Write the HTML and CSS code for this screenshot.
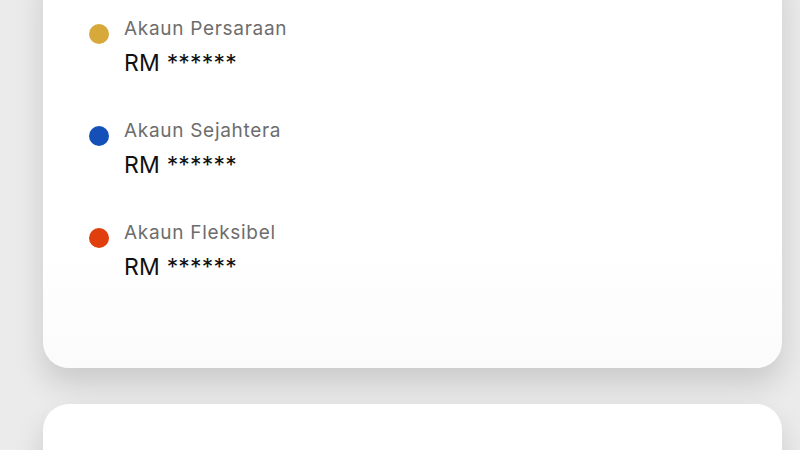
FILE: index.html
```html
<!DOCTYPE html>
<html>
<head>
<meta charset="utf-8">
<link rel="stylesheet" href="styles.css">
</head>
<body>
<div class="page">
  <div class="card card-top">
    <div class="row">
      <span class="dot dot-gold"></span>
      <div class="info">
        <div class="label">Akaun Persaraan</div>
        <div class="value">RM ******</div>
      </div>
    </div>
    <div class="row">
      <span class="dot dot-blue"></span>
      <div class="info">
        <div class="label">Akaun Sejahtera</div>
        <div class="value">RM ******</div>
      </div>
    </div>
    <div class="row">
      <span class="dot dot-red"></span>
      <div class="info">
        <div class="label">Akaun Fleksibel</div>
        <div class="value">RM ******</div>
      </div>
    </div>
  </div>
  <div class="card card-next"></div>
</div>
</body>
</html>
```
FILE: styles.css
```css
html, body {
  margin: 0;
  padding: 0;
  width: 800px;
  height: 450px;
  overflow: hidden;
  background: #ebebeb;
  font-family: "Inter", "Liberation Sans", sans-serif;
}
.page {
  display: flex;
  flex-direction: column;
  gap: 36px;
  padding: 0 18px 0 43px;
  margin-top: -40px;
}
.card {
  background: #ffffff;
  border-radius: 26px;
  box-shadow: 0 16px 30px rgba(0, 0, 0, 0.14);
}
.card-top {
  height: 408px;
  padding: 57px 0 0 46px;
  box-sizing: border-box;
  display: flex;
  flex-direction: column;
  gap: 42px;
  background: linear-gradient(#ffffff 70%, #fbfbfb 100%);
}
.card-next {
  height: 120px;
}
.row {
  display: flex;
  align-items: flex-start;
  gap: 15px;
}
.dot {
  width: 20px;
  height: 20px;
  border-radius: 50%;
  margin-top: 7px;
  flex: none;
}
.dot-gold { background: #d6a93a; }
.dot-blue { background: #1450b8; }
.dot-red { background: #e13e0e; }
.info {
  display: flex;
  flex-direction: column;
  gap: 8px;
}
.label {
  font-size: 19px;
  line-height: 24px;
  color: #6d6d6d;
  letter-spacing: 0.7px;
}
.value {
  font-size: 23px;
  line-height: 28px;
  color: #111111;
  letter-spacing: 0.2px;
}
```
